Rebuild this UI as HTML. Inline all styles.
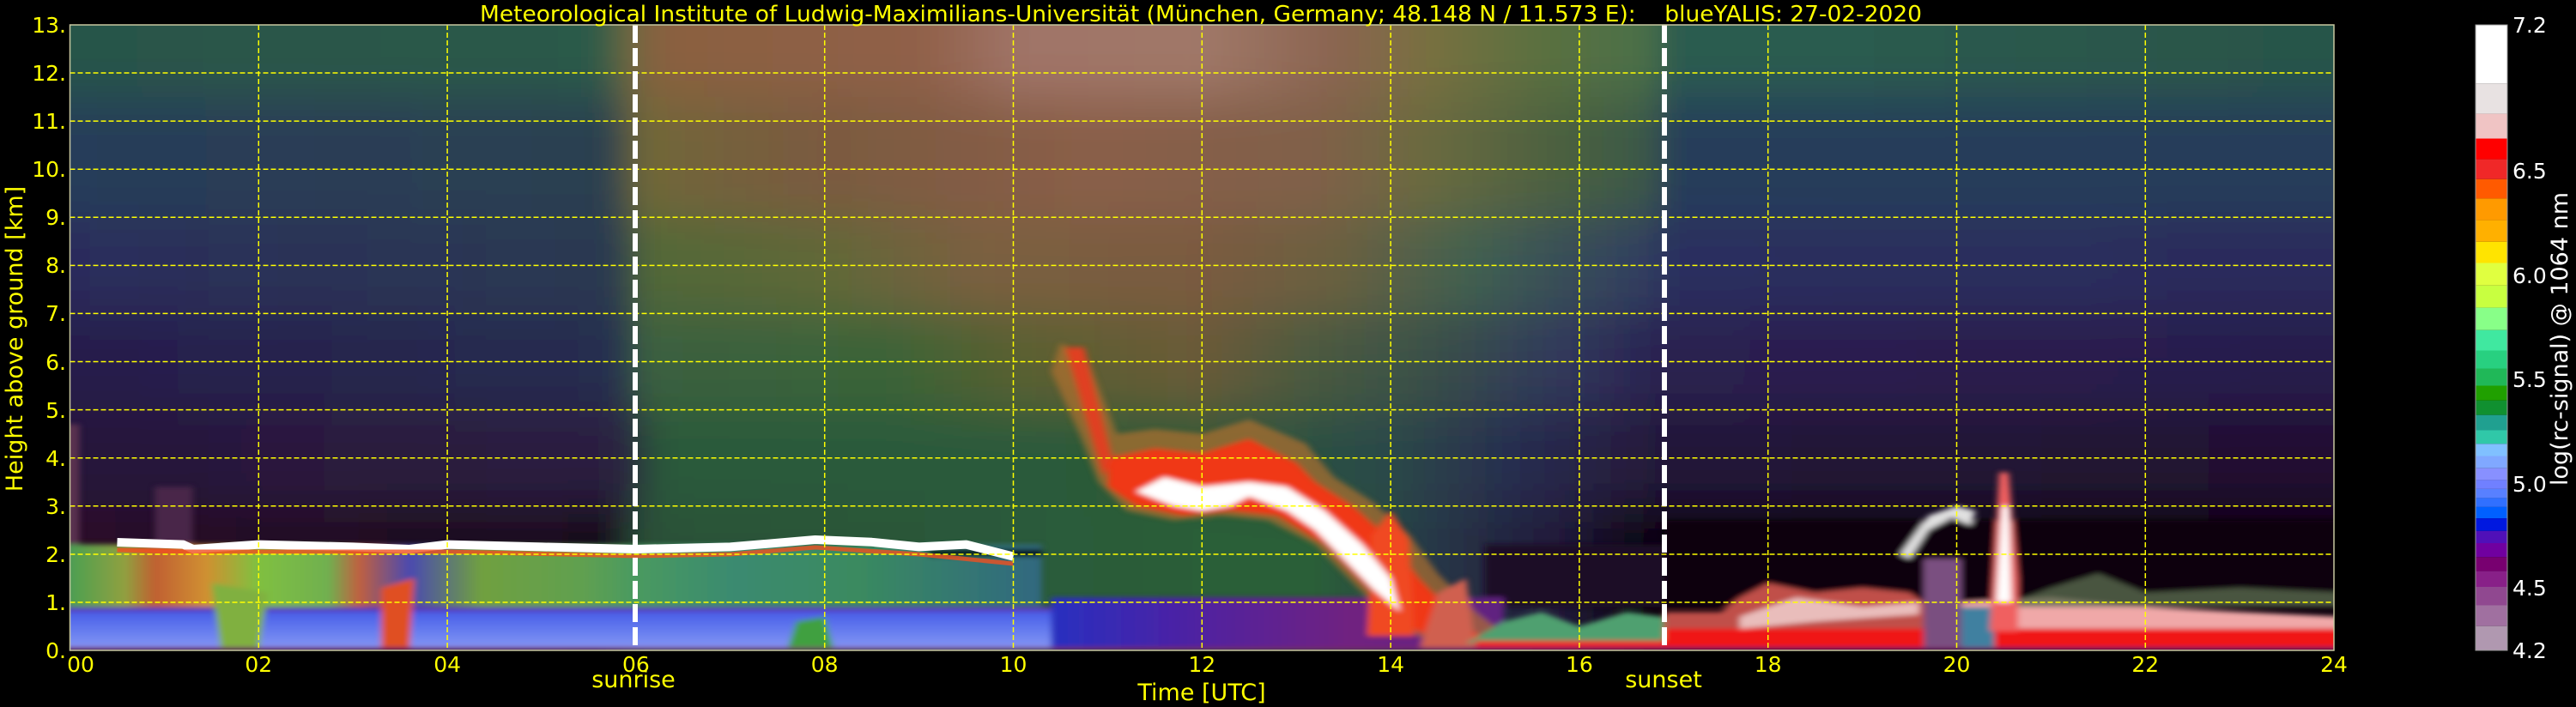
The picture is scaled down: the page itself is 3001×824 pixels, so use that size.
<!DOCTYPE html>
<html><head><meta charset="utf-8"><style>
html,body{margin:0;padding:0;background:#000;width:3001px;height:824px;overflow:hidden}
svg{display:block}
text{font-family:"DejaVu Sans","Liberation Sans",sans-serif}
</style></head><body>
<svg width="3001" height="824" viewBox="0 0 3001 824" xmlns="http://www.w3.org/2000/svg">
<defs>
<clipPath id="pc"><rect x="81.5" y="29" width="2637.5" height="729"/></clipPath>
<filter id="bl" x="-5%" y="-20%" width="110%" height="140%"><feGaussianBlur stdDeviation="18 28"/></filter>
<filter id="bl2" x="-5%" y="-20%" width="110%" height="140%"><feGaussianBlur stdDeviation="4 3"/></filter>
<linearGradient id="g12" gradientUnits="userSpaceOnUse" x1="81.5" x2="2719" y1="0" y2="0">
<stop offset="0" stop-color="#285448"/><stop offset=".235" stop-color="#2c5a48"/><stop offset=".245" stop-color="#6a6a40"/><stop offset=".26" stop-color="#8a6040"/><stop offset=".375" stop-color="#906048"/><stop offset=".42" stop-color="#a07468"/><stop offset=".5" stop-color="#a07868"/><stop offset=".56" stop-color="#8a6450"/><stop offset=".6" stop-color="#787040"/><stop offset=".65" stop-color="#5a7040"/><stop offset=".70" stop-color="#4a7048"/><stop offset=".705" stop-color="#2a5a50"/><stop offset=".75" stop-color="#2c5c50"/><stop offset="1" stop-color="#285448"/></linearGradient>
<linearGradient id="g10" gradientUnits="userSpaceOnUse" x1="81.5" x2="2719" y1="0" y2="0">
<stop offset="0" stop-color="#283c5a"/><stop offset=".24" stop-color="#2a4050"/><stop offset=".25" stop-color="#706838"/><stop offset=".33" stop-color="#7a5a40"/><stop offset=".45" stop-color="#8a5e48"/><stop offset=".55" stop-color="#806048"/><stop offset=".6" stop-color="#6a6a40"/><stop offset=".66" stop-color="#4a6040"/><stop offset=".70" stop-color="#3a5848"/><stop offset=".705" stop-color="#283e5a"/><stop offset="1" stop-color="#283c5a"/></linearGradient>
<linearGradient id="g8" gradientUnits="userSpaceOnUse" x1="81.5" x2="2719" y1="0" y2="0">
<stop offset="0" stop-color="#2a2c5c"/><stop offset=".245" stop-color="#2a3a50"/><stop offset=".25" stop-color="#506838"/><stop offset=".333" stop-color="#606838"/><stop offset=".4" stop-color="#7a6040"/><stop offset=".5" stop-color="#7a5a40"/><stop offset=".56" stop-color="#6a6040"/><stop offset=".62" stop-color="#406050"/><stop offset=".70" stop-color="#303c60"/><stop offset=".705" stop-color="#2a2e5e"/><stop offset="1" stop-color="#2a2c5c"/></linearGradient>
<linearGradient id="g6" gradientUnits="userSpaceOnUse" x1="81.5" x2="2719" y1="0" y2="0">
<stop offset="0" stop-color="#281c4c"/><stop offset=".245" stop-color="#282e50"/><stop offset=".25" stop-color="#3a6040"/><stop offset=".36" stop-color="#3a6438"/><stop offset=".42" stop-color="#5a6030"/><stop offset=".5" stop-color="#6a5a38"/><stop offset=".55" stop-color="#4a5a40"/><stop offset=".6" stop-color="#3a5048"/><stop offset=".66" stop-color="#30385c"/><stop offset=".705" stop-color="#2a2050"/><stop offset="1" stop-color="#281c4c"/></linearGradient>
<linearGradient id="g4" gradientUnits="userSpaceOnUse" x1="81.5" x2="2719" y1="0" y2="0">
<stop offset="0" stop-color="#28143a"/><stop offset=".245" stop-color="#2a2040"/><stop offset=".26" stop-color="#2a5a3a"/><stop offset=".42" stop-color="#2a5a3a"/><stop offset=".5" stop-color="#305a38"/><stop offset=".58" stop-color="#2a4a48"/><stop offset=".64" stop-color="#282c50"/><stop offset=".705" stop-color="#241838"/><stop offset="1" stop-color="#201030"/></linearGradient>
<linearGradient id="g2" gradientUnits="userSpaceOnUse" x1="81.5" x2="2719" y1="0" y2="0">
<stop offset="0" stop-color="#2a0e28"/><stop offset=".24" stop-color="#180818"/><stop offset=".25" stop-color="#2a5038"/><stop offset=".42" stop-color="#2a5a3a"/><stop offset=".55" stop-color="#2a6038"/><stop offset=".6" stop-color="#283848"/><stop offset=".66" stop-color="#201838"/><stop offset=".70" stop-color="#0a0408"/><stop offset="1" stop-color="#0a0408"/></linearGradient>
<linearGradient id="gbl" x1="0" x2="1" y1="0" y2="0">
<stop offset="0" stop-color="#4a3aa0"/><stop offset=".05" stop-color="#50a050"/><stop offset=".1" stop-color="#90a040"/><stop offset=".13" stop-color="#c06030"/><stop offset=".18" stop-color="#d09030"/><stop offset=".23" stop-color="#80c040"/><stop offset=".3" stop-color="#70b050"/><stop offset=".33" stop-color="#c06040"/><stop offset=".38" stop-color="#4a4ab0"/><stop offset=".45" stop-color="#70a040"/><stop offset=".55" stop-color="#60a050"/><stop offset=".6" stop-color="#4a9a60"/><stop offset=".7" stop-color="#3a8a70"/><stop offset=".82" stop-color="#3a8a60"/><stop offset="1" stop-color="#306880"/></linearGradient>
<linearGradient id="gblue" x1="0" x2="0" y1="0" y2="1">
<stop offset="0" stop-color="#8898f4"/><stop offset=".4" stop-color="#6a80f0"/><stop offset=".85" stop-color="#4a60e8"/><stop offset="1" stop-color="#6020a0"/></linearGradient>
<linearGradient id="gmid" x1="0" x2="1" y1="0" y2="0">
<stop offset="0" stop-color="#2830c0"/><stop offset=".33" stop-color="#5020a0"/><stop offset=".66" stop-color="#702080"/><stop offset="1" stop-color="#602080"/></linearGradient>
</defs>
<rect width="3001" height="824" fill="#000"/>
<g clip-path="url(#pc)">
 <g filter="url(#bl)">
  <rect x="0" y="-60" width="3001" height="173" fill="url(#g12)"/>
  <rect x="0" y="113" width="3001" height="140" fill="url(#g10)"/>
  <rect x="0" y="253" width="3001" height="112" fill="url(#g8)"/>
  <rect x="0" y="365" width="3001" height="112" fill="url(#g6)"/>
  <rect x="0" y="477" width="3001" height="113" fill="url(#g4)"/>
  <rect x="0" y="590" width="3001" height="200" fill="url(#g2)"/>
 </g>
 <g filter="url(#bl2)">
 <g transform="translate(81.5 758) scale(109.9 -56.08)">
  <rect x="-0.5" y="2.2" width="0.6" height="2.5" fill="#5a3050"/>
  <rect x="0.9" y="2.2" width="0.4" height="1.2" fill="#4a2848"/>
  <rect x="16.9" y="0.9" width="7.2" height="1.8" fill="#080408"/>
  <rect x="15" y="0.9" width="1.9" height="1.3" fill="#1a1028"/>
  <rect x="-0.5" y="0.9" width="10.8" height="1.3" fill="url(#gbl)"/>
  <rect x="-0.5" y="0" width="11" height="0.9" fill="url(#gblue)"/>
  <rect x="10.4" y="0" width="4.8" height="1.1" fill="url(#gmid)"/>
  <polygon points="1.6,0 2.0,0 2.1,1.2 1.5,1.4" fill="#80b040"/>
  <polygon points="3.3,0 3.6,0 3.65,1.5 3.3,1.3" fill="#e05020"/>
  <polygon points="7.6,0 8.1,0 8.0,0.7 7.7,0.6" fill="#40a040"/>
  <polygon points="9.1,1.95 10.3,1.95 10.3,2.1 9.1,2.1" fill="#000"/>
  <polygon points="10.5,6.4 10.8,6.0 11.1,4.5 11.5,4.6 12,4.5 12.5,4.8 13.1,4.3 13.4,3.6 13.8,3.1 14.2,2.4 14.5,1.6 14.9,0.8 15.3,0.2 14.5,0.1 14.1,0.5 13.7,1.2 13.2,2.2 12.7,2.7 12.2,2.8 11.7,2.7 11.2,2.9 10.9,3.5 10.7,4.5 10.4,5.8" fill="#b07030" opacity="0.7"/>
  <polygon points="11.0,4.0 11.5,4.2 12,4.1 12.5,4.4 13,3.9 13.2,3.5 13.6,3.0 14.0,2.3 14.3,1.5 14.7,0.7 15.0,0.2 14.6,0.1 14.2,0.5 13.8,1.2 13.3,2.2 12.8,2.8 12.3,2.9 11.8,2.8 11.3,3.0 11.0,3.4" fill="#f03818"/>
  <polygon points="10.55,6.3 10.75,6.3 11.05,4.0 10.95,3.6" fill="#e04020"/>
  <polygon points="13.75,0.3 14.25,0.3 14.2,2.3 14.0,2.9 13.8,2.4" fill="#f04820"/>
  <polygon points="14.3,0 14.9,0 14.8,1.5 14.5,1.2" fill="#d06050"/>
  <polygon points="11.3,3.3 11.7,3.0 12.0,2.9 12.3,3.0 12.5,3.2 12.9,2.9 13.2,2.5 13.5,1.9 13.8,1.3 14.1,0.8 14.0,1.5 13.7,2.2 13.3,2.9 12.9,3.4 12.5,3.5 12.0,3.4 11.6,3.6" fill="#ffffff"/>
  <polygon points="14.8,0.15 15.2,0.6 15.6,0.8 16,0.5 16.5,0.8 16.9,0.7 16.9,0.15" fill="#50a070"/>
  <rect x="14.9" y="0" width="2.1" height="0.2" fill="#f02020"/>
  <polygon points="16.9,0.8 17.5,0.8 17.7,1.1 18,1.4 18.5,1.2 19,1.3 19.5,1.2 19.65,1.0 19.65,0 16.9,0" fill="#c05048"/>
  <rect x="16.9" y="0" width="7.2" height="0.45" fill="#f01818"/>
  <polygon points="17.7,0.7 18.3,1.1 19,0.9 19.6,1.0 19.6,0.75 18.5,0.6 17.7,0.45" fill="#f0d0d0" opacity="0.85"/>
  <polygon points="20.05,0.45 20.05,1.0 21,1.1 22,0.9 23,0.8 24.1,0.7 24.1,0.45" fill="#f0a8a8"/>
  <polygon points="20.6,1.0 21,1.3 21.5,1.6 22,1.2 23,1.3 24.1,1.2 24.1,0.9 20.6,0.9" fill="#5a6a50" opacity="0.8"/>
  <rect x="19.65" y="0" width="0.4" height="1.9" fill="#7a5080"/>
  <rect x="20.05" y="0" width="0.35" height="0.9" fill="#4080a0"/>
  <polygon points="20.35,0.4 20.45,3.7 20.55,3.7 20.65,1.5 20.65,0.4" fill="#f06060"/>
  <polygon points="20.42,1.0 20.48,3.0 20.55,3.0 20.58,1.0" fill="#ffffff"/>
  <polygon points="19.4,2.0 19.7,2.8 20.0,3.0 20.2,2.9 20.15,2.6 19.95,2.75 19.7,2.5 19.5,1.9" fill="#e0e0e0"/>
  <polygon points="-0.5,0 24.5,0 24.5,0.06 -0.5,0.06" fill="#802070"/>
 </g></g>
 <polyline points="136.5,632 213.4,634.6 225,640 301.3,634.6 411.2,637.4 477,640 521.1,634.6 631,637.4 740.9,640 850.8,637.4 949.7,629 1015.6,631.8 1070.6,637.4 1125.6,634.6 1180.5,648.6" fill="none" stroke="#ffffff" stroke-width="10" stroke-linejoin="round"/>
 <polyline points="136.5,641 213.4,643 301.3,643 521.1,643 740.9,648 850.8,646 949.7,638 1070.6,646 1180.5,657" fill="none" stroke="#f05020" stroke-width="5" opacity="0.8"/>
</g>
<g stroke="#ffff00" stroke-width="1.5" stroke-dasharray="6 3" fill="none">
 <path d="M81.5 702H2719M81.5 646H2719M81.5 589.8H2719M81.5 533.7H2719M81.5 477.6H2719M81.5 421.5H2719M81.5 365.4H2719M81.5 309.4H2719M81.5 253.3H2719M81.5 197.2H2719M81.5 141.1H2719M81.5 85H2719"/>
 <path d="M301.3 29V758M521.1 29V758M960.7 29V758M1180.5 29V758M1400.3 29V758M1620.1 29V758M1839.9 29V758M2059.7 29V758M2279.5 29V758M2499.3 29V758"/>
</g>
<g stroke="#ffffff" stroke-width="6" stroke-dasharray="21 6" fill="none">
 <path d="M740 29V758M1939 29V758"/>
</g>
<rect x="81.5" y="29" width="2637.5" height="729" fill="none" stroke="#c8c8a0" stroke-width="1.5"/>
<text x="1399" y="25" font-size="26" fill="#ffff00" text-anchor="middle" textLength="1680" lengthAdjust="spacingAndGlyphs" xml:space="preserve">Meteorological Institute of Ludwig-Maximilians-Universität (München, Germany; 48.148 N / 11.573 E):    blueYALIS: 27-02-2020</text>
<g font-size="25" fill="#ffff00" text-anchor="end">
<text x="77" y="767">0.</text><text x="77" y="711">1.</text><text x="77" y="655">2.</text><text x="77" y="599">3.</text><text x="77" y="543">4.</text><text x="77" y="487">5.</text><text x="77" y="431">6.</text><text x="77" y="374">7.</text><text x="77" y="318">8.</text><text x="77" y="262">9.</text><text x="77" y="206">10.</text><text x="77" y="150">11.</text><text x="77" y="94">12.</text><text x="77" y="38">13.</text>
</g>
<text transform="translate(26 395) rotate(-90)" font-size="27" fill="#ffff00" text-anchor="middle">Height above ground [km]</text>
<g font-size="25" fill="#ffff00" text-anchor="middle">
<text x="94" y="783">00</text><text x="301.3" y="783">02</text><text x="521.1" y="783">04</text><text x="740.9" y="783">06</text><text x="960.7" y="783">08</text><text x="1180.5" y="783">10</text><text x="1400.3" y="783">12</text><text x="1620.1" y="783">14</text><text x="1839.9" y="783">16</text><text x="2059.7" y="783">18</text><text x="2279.5" y="783">20</text><text x="2499.3" y="783">22</text><text x="2719" y="783">24</text>
<text x="738" y="801" font-size="27">sunrise</text>
<text x="1938" y="801" font-size="27">sunset</text>
<text x="1400" y="816" font-size="27">Time [UTC]</text>
</g>
<g>
<rect x="2884" y="29" width="37" height="68.3" fill="#ffffff"/>
<rect x="2884" y="97.3" width="37" height="35.3" fill="#e8e2e2"/>
<rect x="2884" y="132.6" width="37" height="28.9" fill="#f0c4c4"/>
<rect x="2884" y="161.5" width="37" height="24.1" fill="#ff0000"/>
<rect x="2884" y="185.6" width="37" height="23.2" fill="#f02828"/>
<rect x="2884" y="208.8" width="37" height="22.6" fill="#ff5a00"/>
<rect x="2884" y="231.4" width="37" height="25.2" fill="#ff9a00"/>
<rect x="2884" y="256.6" width="37" height="25.2" fill="#ffb000"/>
<rect x="2884" y="281.8" width="37" height="24.7" fill="#ffe400"/>
<rect x="2884" y="306.5" width="37" height="26.3" fill="#e0ff40"/>
<rect x="2884" y="332.8" width="37" height="25.8" fill="#c8ff40"/>
<rect x="2884" y="358.6" width="37" height="26.2" fill="#88ff88"/>
<rect x="2884" y="384.8" width="37" height="23.7" fill="#40e8a0"/>
<rect x="2884" y="408.5" width="37" height="21" fill="#28d080"/>
<rect x="2884" y="429.5" width="37" height="20" fill="#20b858"/>
<rect x="2884" y="449.5" width="37" height="17.3" fill="#20a000"/>
<rect x="2884" y="466.8" width="37" height="16.9" fill="#109030"/>
<rect x="2884" y="483.7" width="37" height="17.8" fill="#20a090"/>
<rect x="2884" y="501.5" width="37" height="15.8" fill="#30c8a8"/>
<rect x="2884" y="517.3" width="37" height="14.2" fill="#80c0ff"/>
<rect x="2884" y="531.5" width="37" height="14.2" fill="#80a8ff"/>
<rect x="2884" y="545.7" width="37" height="13.7" fill="#8890ff"/>
<rect x="2884" y="559.4" width="37" height="10.5" fill="#7080ff"/>
<rect x="2884" y="569.9" width="37" height="10.5" fill="#5880ff"/>
<rect x="2884" y="580.4" width="37" height="10.5" fill="#3070ff"/>
<rect x="2884" y="590.9" width="37" height="13.2" fill="#0060ff"/>
<rect x="2884" y="604.1" width="37" height="14.7" fill="#0018e0"/>
<rect x="2884" y="618.8" width="37" height="14.2" fill="#5010b8"/>
<rect x="2884" y="633" width="37" height="16.3" fill="#7000a0"/>
<rect x="2884" y="649.3" width="37" height="16.3" fill="#780070"/>
<rect x="2884" y="665.6" width="37" height="18.4" fill="#882088"/>
<rect x="2884" y="684" width="37" height="21.5" fill="#904890"/>
<rect x="2884" y="705.5" width="37" height="24.2" fill="#a070a0"/>
<rect x="2884" y="729.7" width="37" height="28.3" fill="#b098b0"/>
<rect x="2884" y="29" width="37" height="729" fill="none" stroke="#999" stroke-width="1"/>
</g>
<g font-size="25" fill="#ffffff">
<text x="2927" y="38">7.2</text><text x="2927" y="208">6.5</text><text x="2927" y="330">6.0</text><text x="2927" y="451">5.5</text><text x="2927" y="573">5.0</text><text x="2927" y="694">4.5</text><text x="2927" y="767">4.2</text>
</g>
<text transform="translate(2991 395) rotate(-90)" font-size="27" fill="#ffffff" text-anchor="middle">log(rc-signal) @ 1064 nm</text>
</svg>
</body></html>
